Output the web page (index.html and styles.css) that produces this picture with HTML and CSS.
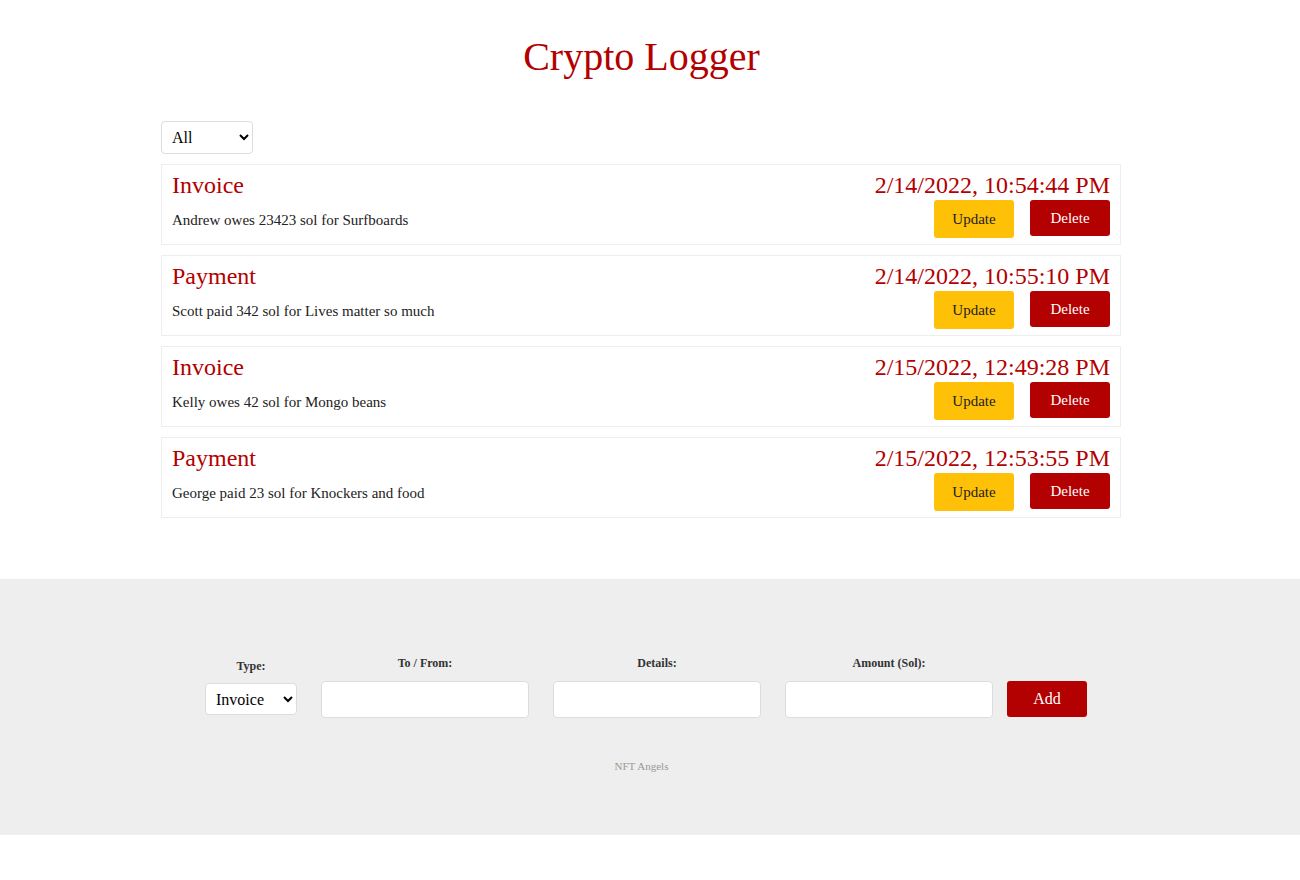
FILE: index.html
```html
<!DOCTYPE html>
<html>
<head>
<meta charset="utf-8">
<title>Crypto Logger</title>
<link rel="stylesheet" href="styles.css">
</head>
<body>
<div class="page">
  <h1 class="title">Crypto Logger</h1>
  <div class="container">
    <select class="filter">
      <option>All</option>
    </select>
    <div class="list">
      <div class="card">
        <div class="card-left">
          <div class="card-type">Invoice</div>
          <div class="card-details">Andrew owes 23423 sol for Surfboards</div>
        </div>
        <div class="card-right">
          <div class="card-date">2/14/2022, 10:54:44 PM</div>
          <div class="card-actions">
            <button class="btn btn-update">Update</button>
            <button class="btn btn-delete">Delete</button>
          </div>
        </div>
      </div>
      <div class="card">
        <div class="card-left">
          <div class="card-type">Payment</div>
          <div class="card-details">Scott paid 342 sol for Lives matter so much</div>
        </div>
        <div class="card-right">
          <div class="card-date">2/14/2022, 10:55:10 PM</div>
          <div class="card-actions">
            <button class="btn btn-update">Update</button>
            <button class="btn btn-delete">Delete</button>
          </div>
        </div>
      </div>
      <div class="card">
        <div class="card-left">
          <div class="card-type">Invoice</div>
          <div class="card-details">Kelly owes 42 sol for Mongo beans</div>
        </div>
        <div class="card-right">
          <div class="card-date">2/15/2022, 12:49:28 PM</div>
          <div class="card-actions">
            <button class="btn btn-update">Update</button>
            <button class="btn btn-delete">Delete</button>
          </div>
        </div>
      </div>
      <div class="card">
        <div class="card-left">
          <div class="card-type">Payment</div>
          <div class="card-details">George paid 23 sol for Knockers and food</div>
        </div>
        <div class="card-right">
          <div class="card-date">2/15/2022, 12:53:55 PM</div>
          <div class="card-actions">
            <button class="btn btn-update">Update</button>
            <button class="btn btn-delete">Delete</button>
          </div>
        </div>
      </div>
    </div>
  </div>
  <footer class="footer">
    <form class="add-form">
      <div class="field field-type">
        <label class="field-label">Type:</label>
        <select class="field-select">
          <option>Invoice</option>
        </select>
      </div>
      <div class="field">
        <label class="field-label">To / From:</label>
        <input class="field-input" type="text">
      </div>
      <div class="field">
        <label class="field-label">Details:</label>
        <input class="field-input" type="text">
      </div>
      <div class="field">
        <label class="field-label">Amount (Sol):</label>
        <input class="field-input" type="text">
      </div>
      <button class="btn btn-add" type="button">Add</button>
    </form>
    <p class="credit">NFT Angels</p>
  </footer>
</div>
</body>
</html>
```

FILE: styles.css
```css
* {
  box-sizing: border-box;
}

html, body {
  margin: 0;
  padding: 0;
  background: #ffffff;
}

body {
  font-family: "Liberation Serif", "Times New Roman", serif;
  color: #222222;
}

.page {
  display: flex;
  flex-direction: column;
}

.title {
  margin: 34px 17px 0 0;
  font-weight: normal;
  font-size: 40px;
  line-height: 46px;
  text-align: center;
  color: #b30000;
}

.container {
  width: 960px;
  margin: 41px 0 0 161px;
  display: flex;
  flex-direction: column;
  align-items: flex-start;
}

.filter {
  width: 92px;
  height: 33px;
  font-family: "Liberation Serif", serif;
  font-size: 16px;
  padding: 0 6px;
  border: 1px solid #dddddd;
  border-radius: 4px;
  background: #ffffff;
  color: #000000;
}

.list {
  width: 100%;
  margin-top: 10px;
  display: flex;
  flex-direction: column;
  gap: 10px;
}

.card {
  border: 1px solid #eeeeee;
  padding: 6px 10px 6px;
  display: flex;
  justify-content: space-between;
  height: 81px;
}

.card-left {
  display: flex;
  flex-direction: column;
}

.card-type {
  font-size: 24px;
  line-height: 28px;
  color: #b30000;
}

.card-details {
  margin-top: 12px;
  font-size: 15px;
  line-height: 18px;
  color: #222222;
}

.card-right {
  display: flex;
  flex-direction: column;
  align-items: flex-end;
}

.card-date {
  font-size: 24px;
  line-height: 28px;
  color: #b30000;
}

.card-actions {
  display: flex;
  gap: 16px;
  align-items: flex-start;
  margin-top: 1px;
}

.btn {
  font-family: "Liberation Serif", serif;
  font-size: 15px;
  border: none;
  border-radius: 3px;
  width: 80px;
  cursor: pointer;
}

.btn-update {
  height: 38px;
  background: #ffc107;
  color: #222222;
}

.btn-delete {
  height: 36px;
  background: #b30000;
  color: #ffffff;
}

.footer {
  margin-top: 61px;
  background: #eeeeee;
  height: 256px;
  padding: 77px 17px 0 0;
  display: flex;
  flex-direction: column;
  align-items: center;
}

.add-form {
  display: flex;
  align-items: flex-end;
  gap: 24px;
  padding-left: 9px;
}

.field {
  display: flex;
  flex-direction: column;
  align-items: center;
}

.field-label {
  font-size: 12px;
  font-weight: bold;
  line-height: 14px;
  color: #333333;
  margin-bottom: 11px;
}

.field-type .field-label {
  margin-bottom: 10px;
}

.field-select {
  width: 92px;
  height: 32px;
  font-family: "Liberation Serif", serif;
  font-size: 16px;
  padding: 0 6px;
  border: 1px solid #dddddd;
  border-radius: 4px;
  background: #ffffff;
  color: #000000;
  margin-bottom: 3px;
}

.field-input {
  width: 208px;
  height: 37px;
  border: 1px solid #dddddd;
  border-radius: 4px;
  background: #ffffff;
}

.btn-add {
  margin-left: -10px;
  height: 36px;
  background: #b30000;
  color: #ffffff;
  font-size: 16px;
  margin-bottom: 1px;
}

.credit {
  margin: 42px 0 0;
  font-size: 11px;
  color: #999999;
}
```
